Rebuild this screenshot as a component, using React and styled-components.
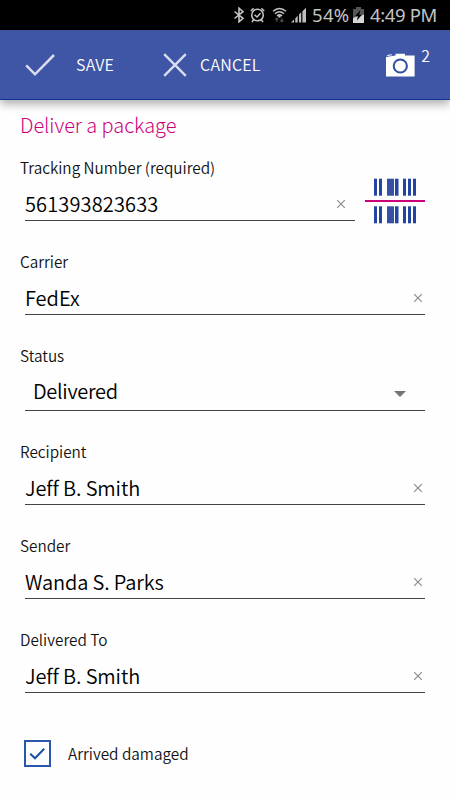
import React, { useState } from 'react';
import styled, { createGlobalStyle } from 'styled-components';

export default function App() {
  const [damaged, setDamaged] = useState(true);

  return (
    <Screen>
      <GlobalStyle />
      <StatusBar />
      <Toolbar />
      <Form>
        <Heading>Deliver a package</Heading>
        <ScanRow>
          <TextField label="Tracking Number (required)" value="561393823633" spacing={0.14} inset={9} />
          <Barcode />
        </ScanRow>
        <TextField label="Carrier" value="FedEx" spacing={0} />
        <Field $tall>
          <Label>Status</Label>
          <SelectBox>
            <Value $spacing={-0.3}>Delivered</Value>
            <Arrow />
          </SelectBox>
        </Field>
        <TextField label="Recipient" value="Jeff B. Smith" />
        <TextField label="Sender" value="Wanda S. Parks" />
        <TextField label="Delivered To" value="Jeff B. Smith" />
        <CheckRow onClick={() => setDamaged(!damaged)}>
          <CheckBox role="checkbox" aria-checked={damaged}>
            {damaged && (
              <svg width="17" height="14" viewBox="0 0 17 14" fill="none">
                <path d="M1.2 6.7L6 11.3L15.2 1.8" stroke="#1d4fa8" strokeWidth="2" />
              </svg>
            )}
          </CheckBox>
          <CheckLabel>Arrived damaged</CheckLabel>
        </CheckRow>
      </Form>
    </Screen>
  );
}

const TextField = ({ label, value, spacing = -0.12, inset = 2 }) => (
  <Field>
    <Label>{label}</Label>
    <InputBox $inset={inset}>
      <Value $spacing={spacing}>{value}</Value>
      <ClearIcon width="10" height="10" viewBox="0 0 10 10">
        <path d="M1.2 1.2L8.8 8.8M8.8 1.2L1.2 8.8" stroke="#8c8c8c" strokeWidth="1.2" />
      </ClearIcon>
    </InputBox>
  </Field>
);

const StatusBar = () => (
  <StatusRow>
    <svg width="12" height="16" viewBox="0 0 12 16" fill="none">
      <path d="M1.5 4.5L10 11.3L6 14.8V1.2L10 4.7L1.5 11.5" stroke="#c4c4c4" strokeWidth="1.6" />
    </svg>
    <Glyph $left={5} width="15" height="16" viewBox="0 0 15 16" fill="none">
      <circle cx="7.5" cy="8" r="5.8" stroke="#c4c4c4" strokeWidth="1.5" />
      <path
        d="M4.5 7.8L7 10L10.5 6.2M.8 4L3.6 1.2M14.2 4L11.4 1.2M3.6 12.8L2 15M11.4 12.8L13 15"
        stroke="#c4c4c4"
        strokeWidth="1.5"
      />
    </Glyph>
    <Glyph $left={7} width="15" height="16" viewBox="0 0 15 16" fill="none">
      <path
        d="M1 4.3Q7.5-1.3 14 4.3M3 6.7Q7.5 2.8 12 6.7M5 9Q7.5 6.8 10 9"
        stroke="#c4c4c4"
        strokeWidth="1.5"
      />
      <circle cx="7.5" cy="9.6" r="1.2" fill="#c4c4c4" />
      <path d="M4.8 10.8V15M3.2 12.7L4.8 11L6.4 12.7M9.9 11V15M8.3 13.2L9.9 15L11.5 13.2" stroke="#4c4c4c" strokeWidth="1.1" />
    </Glyph>
    <Glyph $left={4} width="16" height="16" viewBox="0 0 16 16" fill="#bdbdbd">
      <path d="M0 15.5L3 12.5V15.5ZM4.3 11.2L6.7 8.8V15.5H4.3ZM8 7.5L10.2 5.3V15.5H8ZM11.4 4.3L15 .7V15.5H11.4Z" />
    </Glyph>
    <StatusText $left={5} $width={38} $spacing={0.3}>54%</StatusText>
    <Glyph $left={3} width="11" height="16" viewBox="0 0 11 16">
      <path d="M3 0H8V2H11V16H0V2H3Z" fill="#555" />
      <path d="M0 11L11 7.5V16H0Z" fill="#d6d6d6" />
      <path d="M7.4 3L2.2 9H5L3.8 13.4L9 7.8H6.2Z" fill="#000" />
    </Glyph>
    <StatusText $left={6} $width={68} $spacing={-0.35}>4:49 PM</StatusText>
  </StatusRow>
);

const Toolbar = () => (
  <ToolbarRow>
    <Action $gap={21}>
      <svg width="30" height="24" viewBox="0 0 30 24" fill="none">
        <path d="M1.2 12.3L10 21.3L29 2" stroke="#d9ddee" strokeWidth="2.5" />
      </svg>
      <ActionText>SAVE</ActionText>
    </Action>
    <Action $gap={13} $left={49}>
      <svg width="24" height="24" viewBox="0 0 24 24" fill="none">
        <path d="M1.2 1.2L22.8 22.8M22.8 1.2L1.2 22.8" stroke="#d9ddee" strokeWidth="2.4" />
      </svg>
      <ActionText>CANCEL</ActionText>
    </Action>
    <CameraButton>
      <svg width="29" height="24" viewBox="0 0 29 24">
        <path d="M0 4L9.5 2.6V.8H19V2.6H28.6V23.4H0Z" fill="#fff" />
        <path d="M1.2 2L5.8 1.3V2.2L1.2 3Z" fill="#fff" />
        <circle cx="14.3" cy="13" r="6.6" fill="none" stroke="#2f4da5" strokeWidth="2" />
      </svg>
      <PhotoCount>2</PhotoCount>
    </CameraButton>
  </ToolbarRow>
);

const bars = [
  [9, 3],
  [14, 3],
  [22, 7],
  [30, 3.5],
  [38, 3],
  [43, 3],
  [48, 3],
];

const Barcode = () => (
  <BarcodeIcon width="60" height="46" viewBox="0 0 60 46">
    {bars.map(([x, width]) => (
      <g key={x} fill={width === 7 ? '#3650a4' : '#2344a0'}>
        <rect x={x} y="0.7" width={width} height="17" />
        <rect x={x} y="28.3" width={width} height="17" />
      </g>
    ))}
    <rect y="22" width="60" height="2" fill="#cd007a" />
  </BarcodeIcon>
);

const GlobalStyle = createGlobalStyle`
  * {
    box-sizing: border-box;
  }

  body {
    margin: 0;
    background: #fff;
  }

  svg {
    display: block;
    flex: none;
  }
`;

const Screen = styled.div`
  width: 450px;
  height: 800px;
  overflow: hidden;
  display: flex;
  flex-direction: column;
  background: #fefefe;
  color: #111;
  font-family: 'Noto Sans CJK SC', 'Noto Sans', sans-serif;
  font-weight: 350;
  white-space: nowrap;
`;

const StatusRow = styled.div`
  height: 30px;
  flex: none;
  display: flex;
  align-items: center;
  padding-left: 233px;
  background: #000;
`;

const Glyph = styled.svg`
  margin-left: ${p => p.$left}px;
`;

const StatusText = styled.span`
  width: ${p => p.$width}px;
  margin-left: ${p => p.$left}px;
  color: #c4c4c4;
  font: 18.5px/30px 'Noto Sans', sans-serif;
  letter-spacing: ${p => p.$spacing || 0}px;
`;

const ToolbarRow = styled.header`
  height: 70px;
  flex: none;
  display: flex;
  align-items: center;
  padding: 0 20px 0 25px;
  background: #3f55a5;
  border-bottom: 1px solid #0b3590;
  box-shadow: 0 4px 9px rgba(0, 0, 0, 0.32);
  clip-path: inset(0 0 -20px);
`;

const Action = styled.div`
  display: flex;
  align-items: center;
  gap: ${p => p.$gap}px;
  margin-left: ${p => p.$left || 0}px;
`;

const ActionText = styled.span`
  margin-bottom: 2px;
  color: #fff;
  font-size: 16px;
  line-height: 24px;
  letter-spacing: 0.2px;
`;

const CameraButton = styled.div`
  display: flex;
  align-items: center;
  gap: 6px;
  margin-left: auto;
`;

const PhotoCount = styled.span`
  margin-bottom: 19px;
  color: #fff;
  font-size: 16px;
  line-height: 18px;
`;

const Form = styled.main`
  display: flex;
  flex-direction: column;
  padding: 13px 25px 0 20px;
`;

const Heading = styled.h1`
  margin: 0 0 18px;
  color: #cd007a;
  font-size: 20px;
  font-weight: 300;
  line-height: 24px;
  letter-spacing: -0.06px;
`;

const ScanRow = styled.div`
  display: flex;
  gap: 10px;
`;

const Field = styled.div`
  flex: 1 0 auto;
  height: ${p => (p.$tall ? 68 : 66)}px;
  margin-bottom: 28px;
  display: flex;
  flex-direction: column;
  justify-content: space-between;
`;

const Label = styled.label`
  font-size: 15.3px;
  line-height: 24px;
  color: #111;
`;

const InputBox = styled.div`
  height: 34px;
  display: flex;
  align-items: center;
  justify-content: space-between;
  margin-left: 5px;
  padding-right: ${p => p.$inset}px;
  border-bottom: 1px solid #444;
`;

const SelectBox = styled(InputBox)`
  height: 37px;
  padding: 0 19px 3px 8px;
`;

const Value = styled.span`
  color: #000;
  font-size: 20px;
  line-height: 30px;
  letter-spacing: ${p => p.$spacing}px;
`;

const ClearIcon = styled.svg`
  margin-top: 1px;
`;

const Arrow = styled.span`
  margin-top: 7px;
  border: 6px solid transparent;
  border-top-color: #757575;
  border-bottom: 0;
`;

const BarcodeIcon = styled.svg`
  margin-top: 23px;
`;

const CheckRow = styled.div`
  display: flex;
  align-items: center;
  margin: 19px 0 0 4px;
`;

const CheckBox = styled.div`
  width: 27px;
  height: 27px;
  display: flex;
  align-items: center;
  justify-content: center;
  border: 2px solid #2a56ab;
`;

const CheckLabel = styled.span`
  margin: 0 0 2px 17px;
  font-size: 15.3px;
  line-height: 24px;
`;
